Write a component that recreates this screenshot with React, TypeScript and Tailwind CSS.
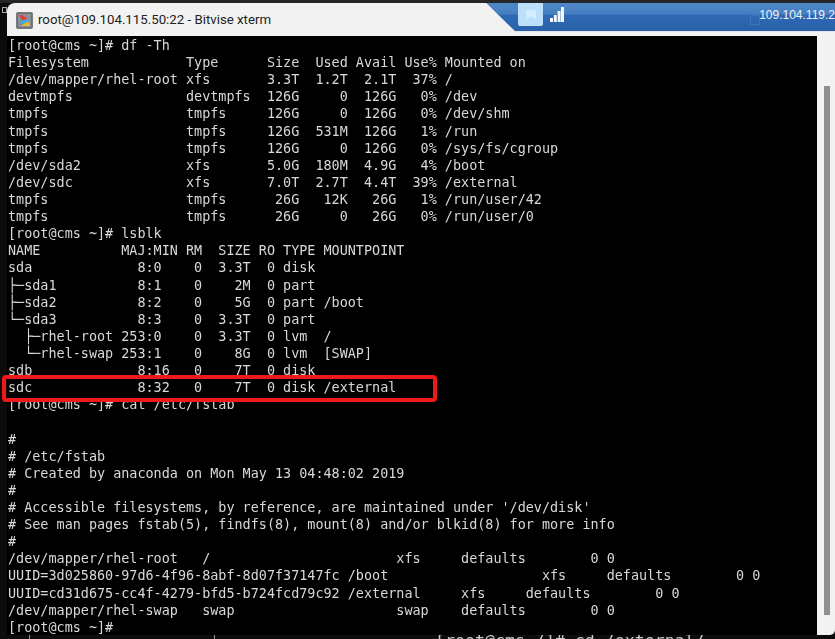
const LINES = [
  '[root@cms ~]# df -Th',
  'Filesystem            Type      Size  Used Avail Use% Mounted on',
  '/dev/mapper/rhel-root xfs       3.3T  1.2T  2.1T  37% /',
  'devtmpfs              devtmpfs  126G     0  126G   0% /dev',
  'tmpfs                 tmpfs     126G     0  126G   0% /dev/shm',
  'tmpfs                 tmpfs     126G  531M  126G   1% /run',
  'tmpfs                 tmpfs     126G     0  126G   0% /sys/fs/cgroup',
  '/dev/sda2             xfs       5.0G  180M  4.9G   4% /boot',
  '/dev/sdc              xfs       7.0T  2.7T  4.4T  39% /external',
  'tmpfs                 tmpfs      26G   12K   26G   1% /run/user/42',
  'tmpfs                 tmpfs      26G     0   26G   0% /run/user/0',
  '[root@cms ~]# lsblk',
  'NAME          MAJ:MIN RM  SIZE RO TYPE MOUNTPOINT',
  'sda             8:0    0  3.3T  0 disk',
  '├─sda1          8:1    0    2M  0 part',
  '├─sda2          8:2    0    5G  0 part /boot',
  '└─sda3          8:3    0  3.3T  0 part',
  '  ├─rhel-root 253:0    0  3.3T  0 lvm  /',
  '  └─rhel-swap 253:1    0    8G  0 lvm  [SWAP]',
  'sdb             8:16   0    7T  0 disk',
  'sdc             8:32   0    7T  0 disk /external',
  '[root@cms ~]# cat /etc/fstab',
  '',
  '#',
  '# /etc/fstab',
  '# Created by anaconda on Mon May 13 04:48:02 2019',
  '#',
  "# Accessible filesystems, by reference, are maintained under '/dev/disk'",
  '# See man pages fstab(5), findfs(8), mount(8) and/or blkid(8) for more info',
  '#',
  '/dev/mapper/rhel-root   /                       xfs     defaults        0 0',
  'UUID=3d025860-97d6-4f96-8abf-8d07f37147fc /boot                   xfs     defaults        0 0',
  'UUID=cd31d675-cc4f-4279-bfd5-b724fcd79c92 /external     xfs     defaults        0 0',
  '/dev/mapper/rhel-swap   swap                    swap    defaults        0 0',
  '[root@cms ~]#',
];

function XtermIcon() {
  return (
    <svg width="17" height="17" viewBox="0 0 17 17" className="shrink-0">
      <rect x="0.5" y="0.5" width="16" height="16" rx="1" fill="#6a6f76" stroke="#7c7c7c" />
      <rect x="2" y="2" width="13" height="13" fill="#8d9096" />
      <path d="M3 3 L6 3 L11 6 L10 8 L6 8 Z" fill="#e0403a" />
      <path d="M3 10 L11 7 L13 8 L12 10 L5 12 Z" fill="#3fa9e0" />
      <path d="M5 14 L10 10.5 L13 10 L14 14 Z" fill="#e8b83e" />
    </svg>
  );
}

function SignalBars() {
  return (
    <svg width="14" height="15" viewBox="0 0 14 15">
      <rect x="0" y="11" width="3" height="4" fill="#f2f6fb" />
      <rect x="3.8" y="8" width="3" height="7" fill="#f2f6fb" />
      <rect x="7.6" y="4" width="3" height="11" fill="#f2f6fb" />
      <rect x="11" y="0" width="3" height="15" fill="#f2f6fb" />
    </svg>
  );
}

function PinIcon() {
  return (
    <svg width="12" height="12" viewBox="0 0 12 12">
      <path d="M1 1 L1 11 L4 8 L8 8 L11 11 L11 1 Z" fill="#d6ecfd" />
    </svg>
  );
}

function RemoteBar() {
  return (
    <div className="absolute left-[486px] top-[3px] right-0 h-[29px] bg-[#e3e8ee] [clip-path:polygon(0_0,100%_0,100%_100%,29px_100%)]">
      <div className="flex h-[28px] items-start bg-[linear-gradient(#4f88c6_0%,#4580c2_38%,#2e68b3_45%,#2a60aa_100%)] pl-[32px] [clip-path:polygon(0_0,100%_0,100%_100%,29px_100%)]">
        <div className="flex h-[23px] w-[25px] items-center justify-center rounded-b-[2px] bg-[#bcdffb]">
          <PinIcon />
        </div>
        <div className="ml-[7px] mt-[4px]">
          <SignalBars />
        </div>
        <div className="ml-auto mt-[2px] flex items-center">
          <span className="mr-[-1px] mt-[9px] h-[10px] w-[10px] border border-[#3f74b4]" />
          <span className="whitespace-nowrap font-['Liberation_Sans',sans-serif] text-[12px] leading-[20px] text-[#eef3f9]">
            109.104.119.2
          </span>
        </div>
      </div>
    </div>
  );
}

function App() {
  return (
    <div className="relative h-[639px] w-[835px] overflow-hidden bg-[#0c0c0c]">
      {/* window behind */}
      <div className="absolute left-0 top-0 h-[3px] w-full bg-[#262626]" />
      <div className="absolute left-[2px] top-[7px] h-[6px] w-[5px] border border-[#aaa]" />
      <div className="absolute bottom-0 left-[29px] h-[4px] w-px bg-[#999]" />
      <div className="absolute bottom-0 left-[214px] h-[4px] w-px bg-[#999]" />
      <div className="absolute left-[435px] top-[631px] whitespace-pre font-['DejaVu_Sans_Mono',monospace] text-[16.6px] leading-[20px] text-[#c8c8c8] blur-[0.3px]">
        {'[root@cms /]# cd /external/'}
      </div>

      {/* xterm window */}
      <div className="absolute left-[7px] top-[3px] flex h-[632px] w-[828px] flex-col overflow-hidden rounded-tl-[8px] rounded-br-[5px] bg-[#f2f2f2]">
        <div className="flex h-[33px] shrink-0 items-center gap-[5px] pl-[9px] pt-[1px]">
          <XtermIcon />
          <span className="font-['Roboto',sans-serif] text-[13.25px] text-[#222]">
            root@109.104.115.50:22 - Bitvise xterm
          </span>
        </div>
        <div className="flex min-h-0 flex-1">
          <div className="relative w-[810px] bg-black pl-px pt-[1px] font-['DejaVu_Sans_Mono',monospace] text-[13.45px] leading-[17.12px] text-[#d8d8d8] blur-[0.3px]">
            {LINES.map((line, i) => (
              <div key={i} className="h-[17.12px] whitespace-pre">
                {line}
              </div>
            ))}
          </div>
          <div className="flex w-[18px] justify-center pl-[1px] pt-[50px] pb-[20px]">
            <div className="w-[6px] bg-[#8f8f8f]" />
          </div>
        </div>
      </div>

      <RemoteBar />

      {/* highlight drawn over the screenshot */}
      <div className="absolute left-[2px] top-[375px] h-[27px] w-[435px] rounded-[4px] border-4 border-[#f01818]" />
    </div>
  );
}

export default App;
